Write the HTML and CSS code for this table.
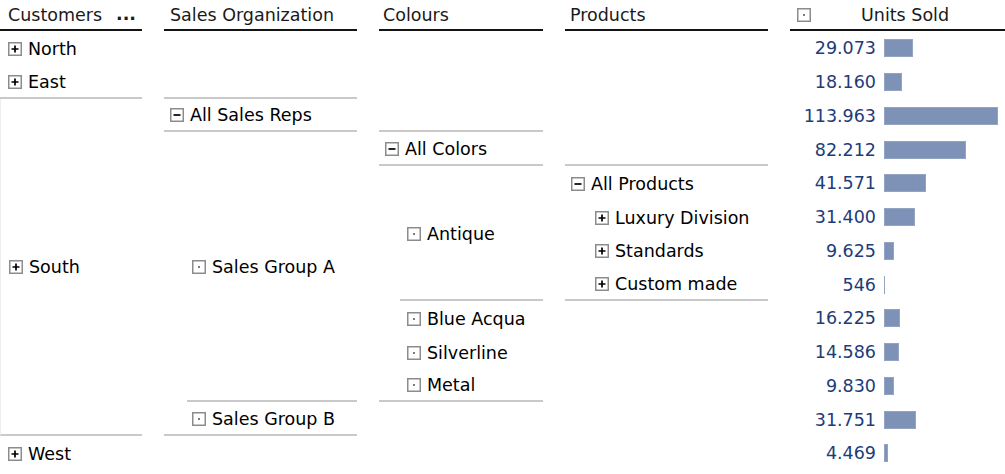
FILE: index.html
```html
<!DOCTYPE html>
<html lang="en">
<head>
<meta charset="utf-8">
<title>Pivot grid</title>
<link rel="stylesheet" href="styles.css">
</head>
<body>
<svg class="defs" width="0" height="0" aria-hidden="true">
  <defs>
    <symbol id="plus" viewBox="0 0 14 14">
      <rect x="0.75" y="0.75" width="12.5" height="12.5" fill="#fff" stroke="#8c8c8c" stroke-width="1.5"/>
      <path d="M3.5 7h7M7 3.5v7" stroke="#000" stroke-width="1.7"/>
    </symbol>
    <symbol id="minus" viewBox="0 0 14 14">
      <rect x="0.75" y="0.75" width="12.5" height="12.5" fill="#fff" stroke="#8c8c8c" stroke-width="1.5"/>
      <path d="M3.5 7h7" stroke="#000" stroke-width="1.7"/>
    </symbol>
    <symbol id="dot" viewBox="0 0 14 14">
      <rect x="0.75" y="0.75" width="12.5" height="12.5" fill="#fff" stroke="#8c8c8c" stroke-width="1.5"/>
      <rect x="6.2" y="6.2" width="1.6" height="1.6" fill="#333"/>
    </symbol>
  </defs>
</svg>

<div class="pivot">
  <div class="col">
    <div class="hd hd-cust"><span>Customers</span><span class="more">...</span></div>
    <div class="cell s1 p0"><svg class="ic"><use href="#plus"/></svg>North</div>
    <div class="cell s1 p0 sep"><svg class="ic"><use href="#plus"/></svg>East</div>
    <div class="cell s10 p0 sep leftline"><svg class="ic"><use href="#plus"/></svg>South</div>
    <div class="cell s1 p0"><svg class="ic"><use href="#plus"/></svg>West</div>
  </div>

  <div class="col">
    <div class="hd hd-org">Sales Organization</div>
    <div class="cell s2 sep"></div>
    <div class="cell s1 p1 sep"><svg class="ic"><use href="#minus"/></svg>All Sales Reps</div>
    <div class="cell s8 sep org-a"><svg class="ic"><use href="#dot"/></svg>Sales Group A</div>
    <div class="cell s1 p2 sep"><svg class="ic"><use href="#dot"/></svg>Sales Group B</div>
  </div>

  <div class="col">
    <div class="hd hd-col">Colours</div>
    <div class="cell s3 sep"></div>
    <div class="cell s1 p1 sep"><svg class="ic"><use href="#minus"/></svg>All Colors</div>
    <div class="cell s4 sep col-a"><svg class="ic"><use href="#dot"/></svg>Antique</div>
    <div class="cell s1 p3"><svg class="ic"><use href="#dot"/></svg>Blue Acqua</div>
    <div class="cell s1 p3"><svg class="ic"><use href="#dot"/></svg>Silverline</div>
    <div class="cell s1 p3 sep"><svg class="ic"><use href="#dot"/></svg>Metal</div>
  </div>

  <div class="col">
    <div class="hd hd-prod">Products</div>
    <div class="cell s4 sep"></div>
    <div class="cell s1 p1"><svg class="ic"><use href="#minus"/></svg>All Products</div>
    <div class="cell s1 p4"><svg class="ic"><use href="#plus"/></svg>Luxury Division</div>
    <div class="cell s1 p4"><svg class="ic"><use href="#plus"/></svg>Standards</div>
    <div class="cell s1 p4 sep"><svg class="ic"><use href="#plus"/></svg>Custom made</div>
  </div>

  <div class="col">
    <div class="hd hd-units"><svg class="ic"><use href="#dot"/></svg><span class="units-title">Units Sold</span></div>
    <div class="val"><span class="num">29.073</span><span class="bar" style="width:29px"></span></div>
    <div class="val"><span class="num">18.160</span><span class="bar" style="width:18px"></span></div>
    <div class="val"><span class="num">113.963</span><span class="bar" style="width:114px"></span></div>
    <div class="val"><span class="num">82.212</span><span class="bar" style="width:82px"></span></div>
    <div class="val"><span class="num">41.571</span><span class="bar" style="width:42px"></span></div>
    <div class="val"><span class="num">31.400</span><span class="bar" style="width:31px"></span></div>
    <div class="val"><span class="num">9.625</span><span class="bar" style="width:10px"></span></div>
    <div class="val"><span class="num">546</span><span class="bar" style="width:1px"></span></div>
    <div class="val"><span class="num">16.225</span><span class="bar" style="width:16px"></span></div>
    <div class="val"><span class="num">14.586</span><span class="bar" style="width:15px"></span></div>
    <div class="val"><span class="num">9.830</span><span class="bar" style="width:10px"></span></div>
    <div class="val"><span class="num">31.751</span><span class="bar" style="width:32px"></span></div>
    <div class="val"><span class="num">4.469</span><span class="bar" style="width:4px"></span></div>
  </div>
</div>
</body>
</html>
```

FILE: styles.css
```css
:root {
  --r: 33.75px;
  --sep: #c9c9c9;
}

* { box-sizing: border-box; }

html, body {
  margin: 0;
  padding: 0;
  background: #fff;
}

body {
  font-family: "DejaVu Sans", Verdana, sans-serif;
  font-size: 17.5px;
  color: #000;
  overflow: hidden;
}

.defs { position: absolute; width: 0; height: 0; }

.pivot {
  display: grid;
  grid-template-columns: 142px 193px 164px 203px 1fr;
  column-gap: 22px;
  width: 1005px;
}

.col {
  display: flex;
  flex-direction: column;
}

.hd {
  height: 31px;
  padding-top: 1px;
  border-bottom: 2px solid #141414;
  display: flex;
  align-items: center;
  color: #1a1a1a;
  white-space: nowrap;
}

.hd-cust { padding-left: 8px; padding-right: 6px; justify-content: space-between; }
.hd-org { padding-left: 6px; }
.hd-col { padding-left: 4px; }
.hd-prod { padding-left: 5px; }
.hd-units { padding-left: 7px; }
.units-title { margin-left: 44px; }

.more {
  font-weight: bold;
  position: relative;
  top: -1px;
}

.cell {
  display: flex;
  align-items: center;
  white-space: nowrap;
  flex: none;
  padding-top: 2px;
}

.s1 { height: var(--r); }
.s2 { height: calc(var(--r) * 2); }
.s3 { height: calc(var(--r) * 3); }
.s4 { height: calc(var(--r) * 4); }
.s8 { height: calc(var(--r) * 8); }
.s10 { height: calc(var(--r) * 10); }

.sep { border-bottom: 2px solid var(--sep); }
.leftline { border-left: 1px solid #eeeeee; }

.p0 { padding-left: 8px; }
.p1 { padding-left: 6px; }
.p2 { padding-left: 28px; }
.p3 { padding-left: 28px; }
.p4 { padding-left: 30px; }

.org-a { margin-left: 23px; padding-left: 5px; }
.col-a { margin-left: 21px; padding-left: 7px; }

.ic {
  width: 14px;
  height: 14px;
  flex: none;
  margin-right: 6px;
}

.val {
  height: var(--r);
  padding-top: 1px;
  display: flex;
  align-items: center;
  flex: none;
}

.num {
  width: 86px;
  text-align: right;
  color: #1d3c78;
  flex: none;
}

.bar {
  height: 18px;
  margin-left: 8px;
  background: #7d92b6;
  box-shadow: inset 0 0 0 1px #93a5c3;
  flex: none;
}
```
